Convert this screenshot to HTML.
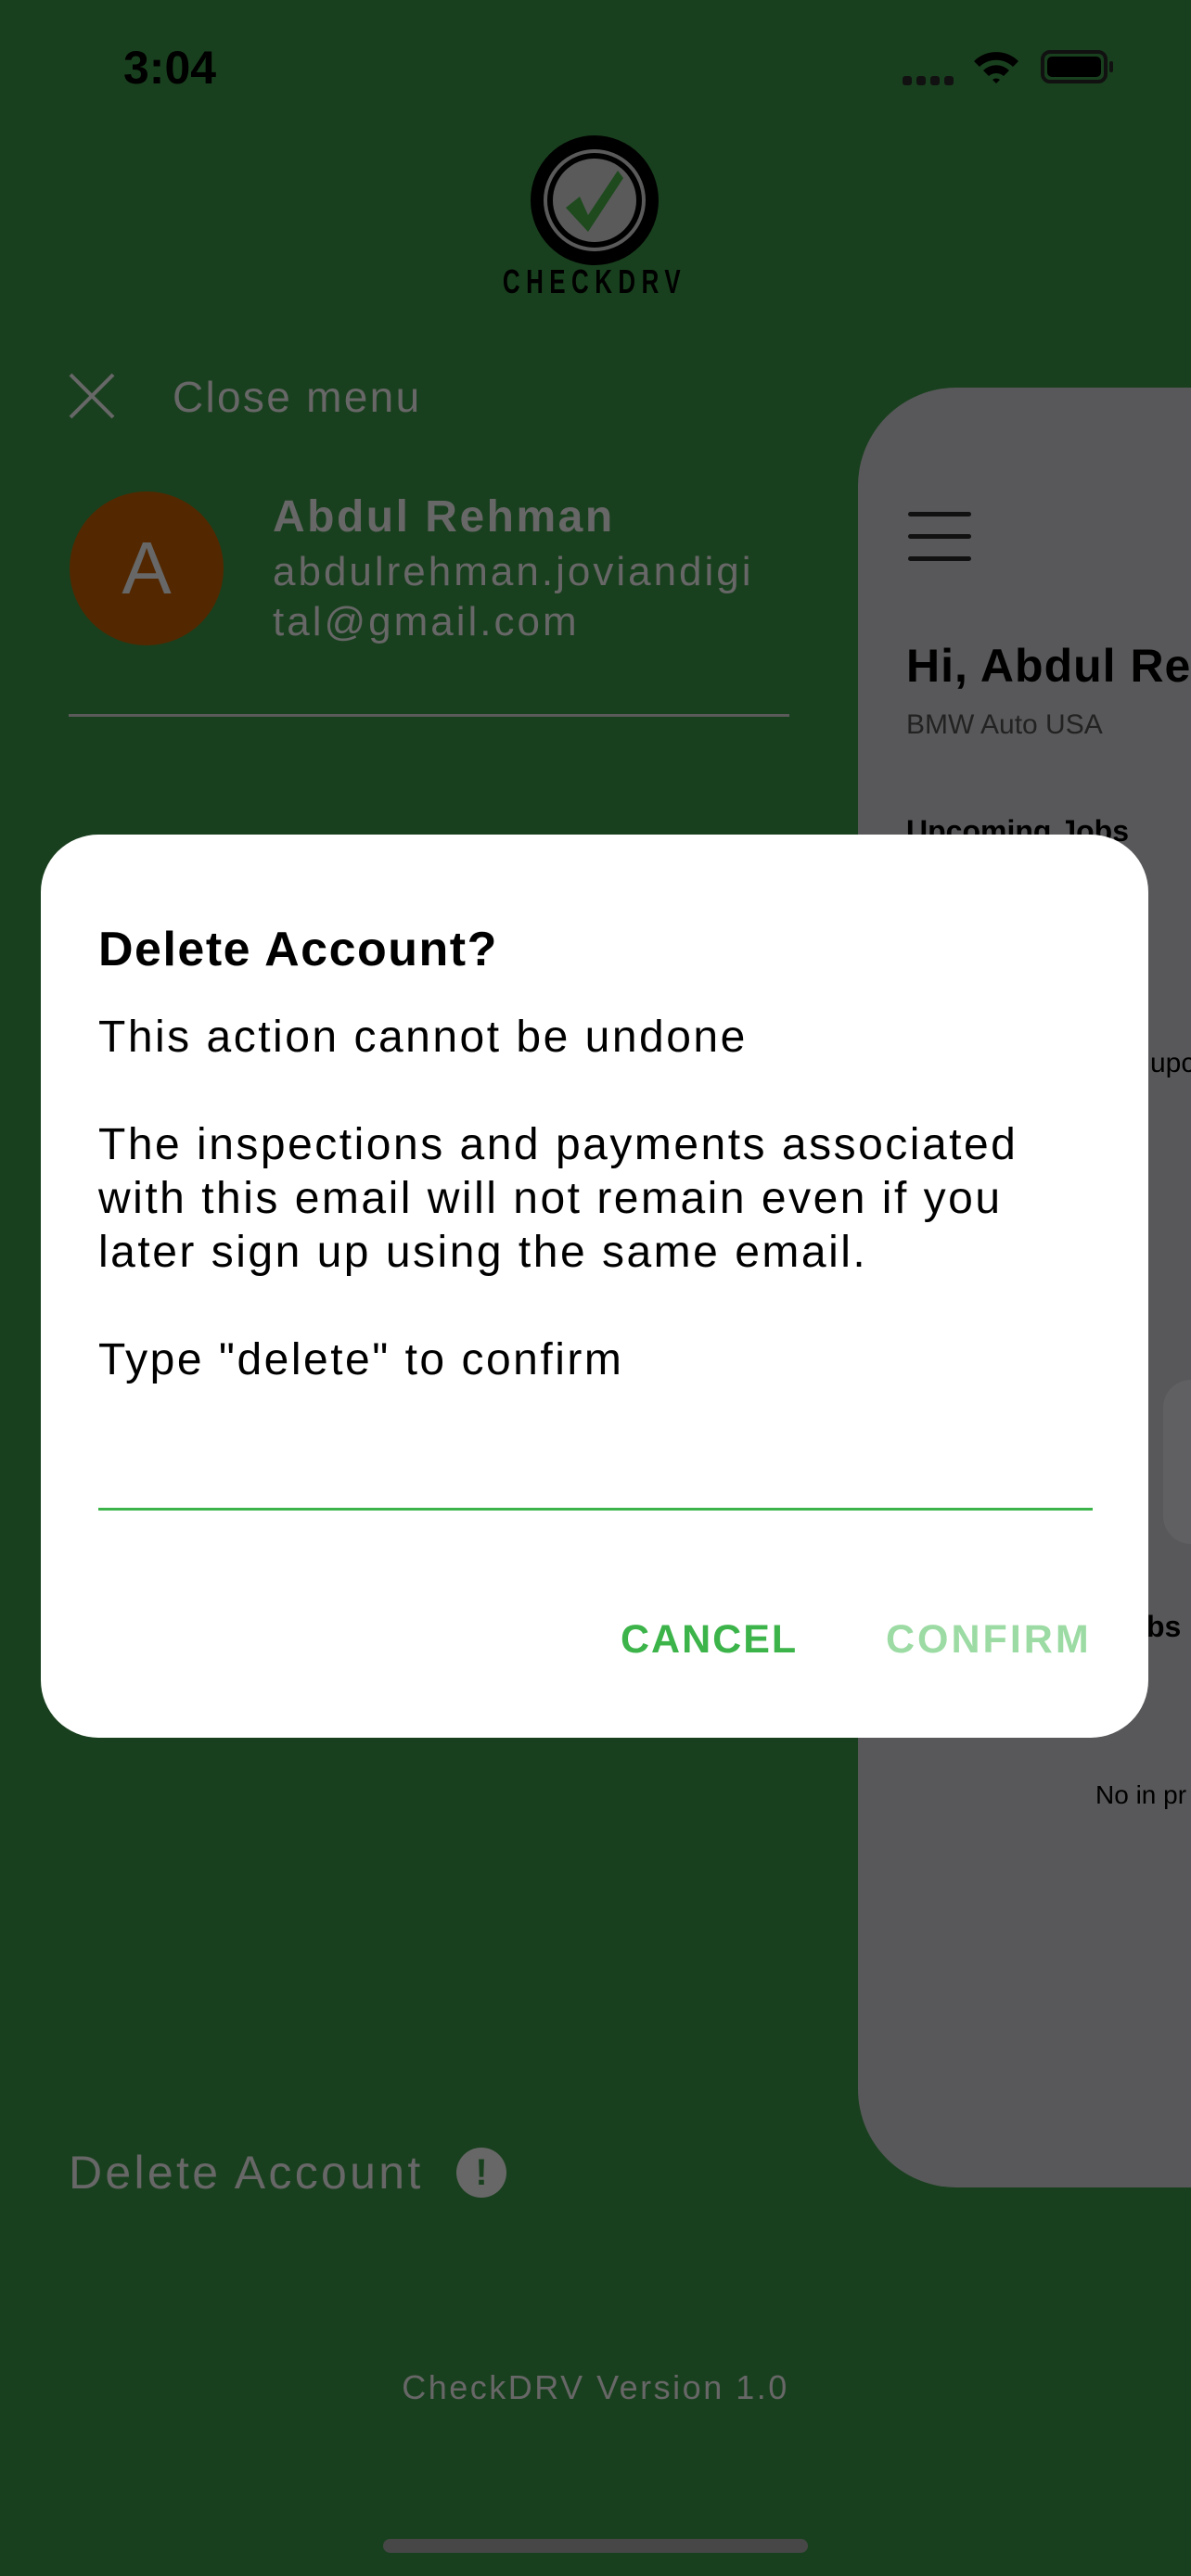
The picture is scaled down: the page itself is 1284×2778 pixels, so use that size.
<!DOCTYPE html>
<html><head><meta charset="utf-8"><style>
*{margin:0;padding:0;box-sizing:border-box}
body{width:1284px;height:2778px;background:#19401e;position:relative;overflow:hidden;font-family:"Liberation Sans",sans-serif}
.a{position:absolute;white-space:nowrap;line-height:1}
.g{color:#676767}
</style></head><body>
<div class="a" style="left:133px;top:48px;font-size:50px;font-weight:bold;color:#000">3:04</div>
<div class="a" style="left:973px;top:82px;width:56px;height:10px;display:flex;gap:5px"><i style="width:10px;height:10px;border-radius:3px;background:#111"></i><i style="width:10px;height:10px;border-radius:3px;background:#111"></i><i style="width:10px;height:10px;border-radius:3px;background:#111"></i><i style="width:10px;height:10px;border-radius:3px;background:#111"></i></div>
<svg class="a" style="left:1048px;top:52px" width="52" height="40" viewBox="0 0 52 40"><path d="M2 14 A34 34 0 0 1 50 14 L44 20 A26 26 0 0 0 8 20Z M12 24 A20 20 0 0 1 40 24 L34 30 A12 12 0 0 0 18 30Z M22 34 L26 38 L30 34 A6 6 0 0 0 22 34Z" fill="#000"/></svg>
<div class="a" style="left:1122px;top:54px;width:72px;height:36px;border:4px solid #111;border-radius:10px;padding:3px"><div style="width:100%;height:100%;background:#000;border-radius:5px"></div></div>
<div class="a" style="left:1196px;top:66px;width:4px;height:12px;background:#111;border-radius:2px"></div>
<svg class="a" style="left:570px;top:144px" width="142" height="144" viewBox="0 0 142 144"><ellipse cx="71" cy="72" rx="69" ry="70" fill="#000"/><circle cx="71" cy="72" r="53" fill="none" stroke="#5a5a5a" stroke-width="4"/><circle cx="71" cy="72" r="45" fill="#5a5a5a"/><path d="M40 80 L55 68 L64 88 L96 40 L102 48 L64 106Z" fill="#1e4a1e"/></svg>
<div class="a" style="left:500px;top:286px;width:282px;font-size:36px;font-weight:bold;color:#000;text-align:center;letter-spacing:9px;transform:scaleX(.72);transform-origin:center">CHECKDRV</div>
<svg class="a" style="left:74px;top:402px" width="50" height="50"><path d="M2 2L48 48M48 2L2 48" stroke="#676767" stroke-width="4"/></svg>
<div class="a g" style="left:186px;top:405px;font-size:46px;letter-spacing:2.3px">Close menu</div>
<div class="a" style="left:75px;top:530px;width:166px;height:166px;border-radius:50%;background:#532800;color:#676767;font-size:80px;text-align:center;line-height:166px">A</div>
<div class="a g" style="left:294px;top:534px;font-size:48px;font-weight:bold;letter-spacing:2.5px">Abdul Rehman</div>
<div class="a g" style="left:294px;top:595px;font-size:44px;letter-spacing:3px">abdulrehman.joviandigi</div>
<div class="a g" style="left:294px;top:649px;font-size:44px;letter-spacing:3px">tal@gmail.com</div>
<div class="a" style="left:74px;top:770px;width:777px;height:3px;background:#5a5a5a"></div>
<div class="a" style="left:925px;top:418px;width:400px;height:1941px;background:#58585a;border-radius:106px 0 0 106px"></div>
<div class="a" style="left:979px;top:552px;width:68px;height:5px;background:#111;border-radius:3px"></div>
<div class="a" style="left:979px;top:576px;width:68px;height:5px;background:#111;border-radius:3px"></div>
<div class="a" style="left:979px;top:600px;width:68px;height:5px;background:#111;border-radius:3px"></div>
<div class="a" style="left:977px;top:693px;font-size:50px;font-weight:bold;color:#000;letter-spacing:1px">Hi, Abdul Re</div>
<div class="a" style="left:977px;top:767px;font-size:30px;color:#222">BMW Auto USA</div>
<div class="a" style="left:977px;top:880px;font-size:32px;font-weight:bold;color:#000">Upcoming Jobs</div>
<div class="a" style="left:1240px;top:1132px;font-size:30px;color:#000">upc</div>
<div class="a" style="left:1254px;top:1488px;width:80px;height:177px;background:#606062;border-radius:30px"></div>
<div class="a" style="left:1236px;top:1738px;font-size:32px;font-weight:bold;color:#000">bs</div>
<div class="a" style="left:1181px;top:1922px;font-size:28px;color:#000">No in pr</div>
<div class="a" style="left:44px;top:900px;width:1194px;height:974px;background:#fff;border-radius:62px"></div>
<div class="a" style="left:106px;top:998px;font-size:52px;font-weight:bold;color:#000;letter-spacing:1.5px">Delete Account?</div>
<div class="a" style="left:106px;top:1090px;font-size:48px;letter-spacing:2.5px;color:#000;white-space:normal;width:1120px;line-height:58px">This action cannot be undone<br><br>The inspections and payments associated<br>with this email will not remain even if you<br>later sign up using the same email.<br><br>Type "delete" to confirm</div>
<div class="a" style="left:106px;top:1626px;width:1072px;height:3px;background:#3cb44a"></div>
<div class="a" style="left:669px;top:1747px;font-size:43px;font-weight:bold;color:#3cb44a;letter-spacing:2px">CANCEL</div>
<div class="a" style="left:955px;top:1747px;font-size:43px;font-weight:bold;color:#9cdba3;letter-spacing:3px">CONFIRM</div>
<div class="a g" style="left:74px;top:2318px;font-size:50px;letter-spacing:3.3px">Delete Account</div>
<div class="a" style="left:492px;top:2316px;width:54px;height:54px;border-radius:50%;background:#676767;color:#19401e;font-size:40px;font-weight:bold;text-align:center;line-height:54px">!</div>
<div class="a g" style="left:0;width:1284px;text-align:center;top:2557px;font-size:36px;letter-spacing:2.5px">CheckDRV Version 1.0</div>
<div class="a" style="left:413px;top:2738px;width:458px;height:15px;border-radius:8px;background:#474747"></div>
</body></html>
